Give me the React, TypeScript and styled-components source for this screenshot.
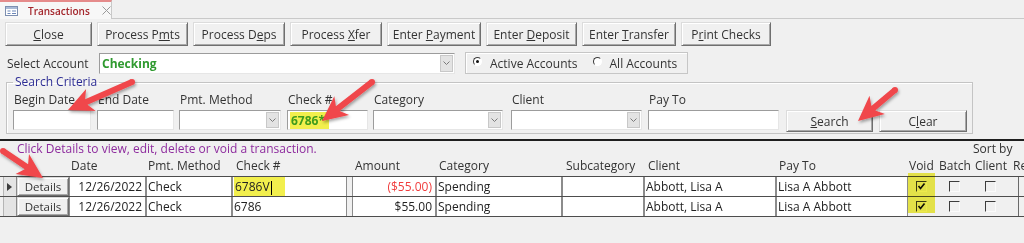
import React from 'react';
import styled, {createGlobalStyle} from 'styled-components';

const GlobalStyle = createGlobalStyle`
	html, body {
		margin: 0;
		padding: 0;
		background: #f0f0f0;
		overflow: hidden;
	}
	body {
		font-family: "Open Sans", "Noto Sans", "Liberation Sans", sans-serif;
		font-size: 12px;
		color: #333;
	}
`;

const Screen = styled.div`
	position: relative;
	width: 1024px;
	height: 243px;
	overflow: hidden;
	background: #f0f0f0;
`;

/* ---------- document tab ---------- */

const TabBar = styled.div`
	display: flex;
	height: 19px;
	box-sizing: border-box;
	border-bottom: 1px solid #c9c9c9;
`;

const Tab = styled.div`
	display: flex;
	align-items: center;
	width: 112px;
	height: 19px;
	box-sizing: border-box;
	padding-left: 5px;
	background: #f7f7f7;
	border-top: 2px solid #e58b8b;
	border-right: 1px solid #c9c9c9;
`;

const TabTitle = styled.span`
	margin-left: 10px;
	font-size: 10px;
	font-weight: 600;
	color: #a4262c;
	line-height: 14px;
`;

const TabClose = styled.span`
	display: flex;
	margin-left: 12px;
`;

/* ---------- buttons ---------- */

const Button = styled.div<{w: number; h?: number}>`
	display: flex;
	align-items: center;
	justify-content: center;
	width: ${p => p.w}px;
	height: ${p => p.h || 24}px;
	box-sizing: border-box;
	background: #f0f0f0;
	border: 1px solid;
	border-color: #dcdcdc #6f6f6f #6f6f6f #dcdcdc;
	box-shadow: inset 1px 1px 0 #fff, inset -1px -1px 0 #a8a8a8;
	color: #333;
	font-size: 12px;
	white-space: pre;
`;

const Toolbar = styled.div`
	display: flex;
	gap: 5px;
	padding: 3px 0 0 5px;
`;

/* ---------- account row ---------- */

const AccountRow = styled.div`
	display: flex;
	align-items: center;
	margin-top: 6px;
	padding-left: 7px;
`;

const RowLabel = styled.div`
	width: 92px;
	color: #333;
`;

const Sunken = styled.div<{w: number; h?: number}>`
	display: flex;
	align-items: center;
	width: ${p => p.w}px;
	height: ${p => p.h || 20}px;
	box-sizing: border-box;
	background: #fff;
	border: 1px solid;
	border-color: #9c9c9c #e6e6e6 #e6e6e6 #9c9c9c;
`;

const FieldText = styled.div<{green?: boolean}>`
	flex: 1;
	padding-left: 2px;
	font-weight: ${p => (p.green ? 700 : 400)};
	color: ${p => (p.green ? '#2f9a2f' : '#222')};
	overflow: hidden;
	white-space: nowrap;
`;

const DropButton = styled.div`
	display: flex;
	align-items: center;
	justify-content: center;
	width: 11px;
	align-self: stretch;
	margin: 1px;
	background: #e3e3e3;
	border: 1px solid #c8c8c8;
`;

const RadioFrame = styled.div`
	display: flex;
	align-items: center;
	width: 223px;
	height: 22px;
	margin-left: 10px;
	box-sizing: border-box;
	padding-left: 7px;
	border: 1px solid #c6c6c6;
	box-shadow: inset 1px 1px 0 #fff;
`;

const RadioOption = styled.div<{gap?: number}>`
	display: flex;
	align-items: center;
	margin-right: ${p => p.gap || 0}px;
	color: #333;
`;

const RadioDot = styled.span<{on?: boolean}>`
	position: relative;
	width: 9px;
	height: 9px;
	margin: -4px 8px 0 0;
	border-radius: 50%;
	box-sizing: border-box;
	background: #fff;
	border: 1px solid;
	border-color: #3a3a3a #fff #fff #3a3a3a;
	&::after {
		content: '';
		display: ${p => (p.on ? 'block' : 'none')};
		position: absolute;
		left: 2px;
		top: 2px;
		width: 3px;
		height: 3px;
		border-radius: 50%;
		background: #111;
	}
`;

/* ---------- search criteria ---------- */

const Frame = styled.fieldset`
	width: 967px;
	margin: 1px 0 0 6px;
	padding: 3px 0 3px 6px;
	box-sizing: border-box;
	border: 1px solid #c4c4c4;
	box-shadow: inset 1px 1px 0 #fff;
`;

const Legend = styled.legend`
	padding: 0 2px;
	color: #2d2d94;
	line-height: 14px;
`;

const SearchGrid = styled.div`
	display: grid;
	grid-template-columns: 84px 82px 108px 86px 138px 137px 138px 93px 88px;
	align-items: end;
`;

const Field = styled.div`
	display: flex;
	flex-direction: column;
	gap: 2px;
`;

const FieldLabel = styled.div`
	padding-left: 1px;
	line-height: 16px;
	color: #333;
	white-space: nowrap;
`;

const Highlight = styled.span<{tail?: number}>`
	background: #f2ef4d;
	padding: 1px ${p => p.tail || 4}px 1px 1px;
`;

const GreenBold = styled(Highlight)`
	color: #3f9b1c;
	font-weight: 700;
`;

const SearchButton = styled(Button)`
	margin-bottom: -2px;
`;

/* ---------- detail section ---------- */

const Divider = styled.div`
	height: 2px;
	margin-top: 5px;
	background: #1e1e1e;
`;

const COLUMNS = '14px 52px 77px 86px 120px 84px 126px 82px 132px 132px 31px 36px 38px 1fr';

const HeaderGrid = styled.div`
	display: grid;
	grid-template-columns: ${COLUMNS};
	grid-template-rows: 13px 22px;
	padding-left: 3px;
	align-items: center;
	color: #333;
	white-space: nowrap;
`;

const Instruction = styled.div`
	grid-column: 2 / 10;
	color: #8e2c9e;
	padding-top: 1px;
`;

const SortBy = styled.div`
	grid-column: 13;
	margin-left: -2px;
	padding-top: 1px;
`;

const HeadLabel = styled.div<{col: number; indent?: number}>`
	grid-row: 2;
	grid-column: ${p => p.col};
	padding-left: ${p => (p.indent === undefined ? 3 : p.indent)}px;
	overflow: hidden;
`;

const Rows = styled.div`
	border-top: 1px solid #4d4d4d;
`;

const Row = styled.div`
	display: grid;
	grid-template-columns: ${COLUMNS};
	height: 20px;
	box-sizing: border-box;
	padding-left: 3px;
	border-bottom: 1px solid #4d4d4d;
`;

const Selector = styled.div`
	display: flex;
	align-items: center;
	padding-left: 3px;
	background: #e4e4e4;
	border-right: 1px solid #8a8a8a;
	border-left: 1px solid #b5b5b5;
`;

const Triangle = styled.span`
	width: 0;
	height: 0;
	border-top: 4px solid transparent;
	border-bottom: 4px solid transparent;
	border-left: 5px solid #3c3c3c;
`;

const DetailsButton = styled(Button)`
	width: auto;
	height: 19px;
	font-size: 11.5px;
`;

const Cell = styled.div<{right?: boolean; red?: boolean; spacer?: number}>`
	display: flex;
	align-items: center;
	justify-content: ${p => (p.right ? 'flex-end' : 'flex-start')};
	margin-right: ${p => p.spacer || 0}px;
	padding: 0 ${p => (p.right ? 4 : 2)}px;
	background: #fff;
	box-shadow: inset 1px 0 0 #8c8c8c, inset -1px 0 0 #8c8c8c;
	color: ${p => (p.red ? '#f03c3c' : '#222')};
	white-space: nowrap;
	overflow: hidden;
`;

const Caret = styled.span`
	display: inline-block;
	width: 1px;
	height: 14px;
	margin-left: 1px;
	background: #000;
	vertical-align: middle;
`;

const CheckCell = styled.div<{offset: number}>`
	display: flex;
	align-items: center;
	padding-left: ${p => p.offset}px;
`;

const CheckBox = styled.span`
	display: flex;
	width: 11px;
	height: 11px;
	box-sizing: border-box;
	border: 1px solid;
	border-color: #3c3c3c #fafafa #fafafa #3c3c3c;
`;

const EdgeCell = styled.div`
	margin-left: 5px;
	border-left: 1px solid #6a6a6a;
`;

/* ---------- annotation overlays ---------- */

const Marker = styled.div`
	position: absolute;
	left: 908px;
	top: 173px;
	width: 27px;
	height: 40px;
	background: #f2ef4d;
	mix-blend-mode: multiply;
	pointer-events: none;
`;

const ArrowLayer = styled.svg`
	position: absolute;
	left: 0;
	top: 0;
	pointer-events: none;
`;

const arrowPoints = (x1: number, y1: number, x2: number, y2: number) => {
	const len = Math.hypot(x2 - x1, y2 - y1);
	const ux = (x2 - x1) / len;
	const uy = (y2 - y1) / len;
	const px = -uy;
	const py = ux;
	const headLen = 25;
	const headW = 12;
	const shaft = 3;
	const bx = x2 - ux * headLen;
	const by = y2 - uy * headLen;
	const nx = x2 - ux * (headLen - 5);
	const ny = y2 - uy * (headLen - 5);
	const pts = [
		[x1 + px * shaft, y1 + py * shaft],
		[nx + px * shaft, ny + py * shaft],
		[bx + px * headW, by + py * headW],
		[x2, y2],
		[bx - px * headW, by - py * headW],
		[nx - px * shaft, ny - py * shaft],
		[x1 - px * shaft, y1 - py * shaft],
	];
	return pts.map(p => p.map(v => v.toFixed(1)).join(',')).join(' ');
};

const ARROWS = [
	[132, 82, 68, 110],
	[372, 82, 322, 121],
	[895, 90, 858, 121],
	[3, 151, 43, 178],
];

const Arrows = () => (
	<ArrowLayer width={1024} height={243}>
		<defs>
			<filter id="shadow" x="-20%" y="-20%" width="140%" height="140%">
				<feDropShadow dx="1" dy="2" stdDeviation="1.5" floodColor="#000" floodOpacity="0.35" />
			</filter>
		</defs>
		<g fill="#f0474b" filter="url(#shadow)">
			{ARROWS.map(([x1, y1, x2, y2], i) => (
				<g key={i}>
					<polygon points={arrowPoints(x1, y1, x2, y2)} />
					<circle cx={x1} cy={y1} r={3} />
				</g>
			))}
		</g>
	</ArrowLayer>
);

/* ---------- small drawings ---------- */

const FormIcon = () => (
	<svg width="13" height="10" viewBox="0 0 13 10">
		<rect x="0.5" y="0.5" width="12" height="9" fill="#fff" stroke="#7d8fb0" />
		<rect x="1" y="1" width="11" height="2" fill="#a9bad6" />
		<path d="M2.5 5h3M2.5 7.5h3M7 5h4M7 7.5h4" stroke="#6b86b8" />
	</svg>
);

const CloseIcon = () => (
	<svg width="9" height="9" viewBox="0 0 9 9">
		<path d="M0.5 0.5l8 8M8.5 0.5l-8 8" stroke="#9a9a9a" strokeWidth="1" />
	</svg>
);

const Chevron = () => (
	<svg width="7" height="4" viewBox="0 0 7 4">
		<path d="M0.5 0.5l3 3 3-3" fill="none" stroke="#7a7a7a" />
	</svg>
);

const Tick = () => (
	<svg width="9" height="9" viewBox="0 0 9 9">
		<path d="M1.5 4l2 2.5 4-5" fill="none" stroke="#111" strokeWidth="1.6" />
	</svg>
);

const Combo = ({w, children}: {w: number; children?: React.ReactNode}) => (
	<Sunken w={w}>
		<FieldText>{children}</FieldText>
		<DropButton>
			<Chevron />
		</DropButton>
	</Sunken>
);

const TOOLBAR: [React.ReactNode, number][] = [
	[<span><u>C</u>lose</span>, 87],
	[<span>Process P<u>m</u>ts</span>, 91],
	[<span>Process D<u>e</u>ps</span>, 92],
	[<span>Process <u>X</u>fer</span>, 92],
	[<span>Enter <u>P</u>ayment</span>, 94],
	[<span>Enter <u>D</u>eposit</span>, 91],
	[<span>Enter <u>T</u>ransfer</span>, 94],
	[<span>P<u>r</u>int Checks</span>, 90],
];

const ROWS = [
	{amount: '($55.00)', red: true, check: '6786V', active: true},
	{amount: '$55.00', red: false, check: '6786', active: false},
];

const HEADERS: [string, number, number?][] = [
	['Date', 3, 2],
	['Pmt. Method', 4, 2],
	['Check #', 5, 4],
	['Amount', 6],
	['Category', 7],
	['Subcategory', 8, 4],
	['Client', 9, 4],
	['Pay To', 10],
	['Void', 11, 1],
	['Batch', 12, 0],
	['Client', 13, 0],
	['Re', 14, 0],
];

export default function App() {
	return (
		<Screen>
			<GlobalStyle />
			<TabBar>
				<Tab>
					<FormIcon />
					<TabTitle>Transactions</TabTitle>
					<TabClose>
						<CloseIcon />
					</TabClose>
				</Tab>
			</TabBar>

			<Toolbar>
				{TOOLBAR.map(([label, w], i) => (
					<Button key={i} w={w}>
						{label}
					</Button>
				))}
			</Toolbar>

			<AccountRow>
				<RowLabel>Select Account</RowLabel>
				<Sunken w={356} h={21}>
					<FieldText green>Checking</FieldText>
					<DropButton>
						<Chevron />
					</DropButton>
				</Sunken>
				<RadioFrame>
					<RadioOption gap={15}>
						<RadioDot on />
						Active Accounts
					</RadioOption>
					<RadioOption>
						<RadioDot />
						All Accounts
					</RadioOption>
				</RadioFrame>
			</AccountRow>

			<Frame>
				<Legend>Search Criteria</Legend>
				<SearchGrid>
					<Field>
						<FieldLabel>Begin Date</FieldLabel>
						<Sunken w={78} />
					</Field>
					<Field>
						<FieldLabel>End Date</FieldLabel>
						<Sunken w={77} />
					</Field>
					<Field>
						<FieldLabel>Pmt. Method</FieldLabel>
						<Combo w={102} />
					</Field>
					<Field>
						<FieldLabel>Check #</FieldLabel>
						<Sunken w={81}>
							<FieldText>
								<GreenBold>6786*</GreenBold>
							</FieldText>
						</Sunken>
					</Field>
					<Field>
						<FieldLabel>Category</FieldLabel>
						<Combo w={130} />
					</Field>
					<Field>
						<FieldLabel>Client</FieldLabel>
						<Combo w={131} />
					</Field>
					<Field>
						<FieldLabel>Pay To</FieldLabel>
						<Sunken w={131} />
					</Field>
					<SearchButton w={87} h={22}>
						<span><u>S</u>earch</span>
					</SearchButton>
					<SearchButton w={88} h={22}>
						<span>C<u>l</u>ear</span>
					</SearchButton>
				</SearchGrid>
			</Frame>

			<Divider />

			<HeaderGrid>
				<Instruction>Click Details to view, edit, delete or void a transaction.</Instruction>
				<SortBy>Sort by</SortBy>
				{HEADERS.map(([text, col, indent]) => (
					<HeadLabel key={text + col} col={col} indent={indent}>
						{text}
					</HeadLabel>
				))}
			</HeaderGrid>

			<Rows>
				{ROWS.map((r, i) => (
					<Row key={i}>
						<Selector>{r.active && <Triangle />}</Selector>
						<DetailsButton w={52}>Details</DetailsButton>
						<Cell right>12/26/2022</Cell>
						<Cell>Check</Cell>
						<Cell spacer={5}>
							{r.active ? (
								<Highlight tail={13}>
									{r.check}
									<Caret />
								</Highlight>
							) : (
								r.check
							)}
						</Cell>
						<Cell right red={r.red}>
							{r.amount}
						</Cell>
						<Cell>Spending</Cell>
						<Cell />
						<Cell>Abbott, Lisa A</Cell>
						<Cell>Lisa A Abbott</Cell>
						<CheckCell offset={8}>
							<CheckBox>
								<Tick />
							</CheckBox>
						</CheckCell>
						<CheckCell offset={10}>
							<CheckBox />
						</CheckCell>
						<CheckCell offset={10}>
							<CheckBox />
						</CheckCell>
						<EdgeCell />
					</Row>
				))}
			</Rows>

			<Marker />
			<Arrows />
		</Screen>
	);
}
